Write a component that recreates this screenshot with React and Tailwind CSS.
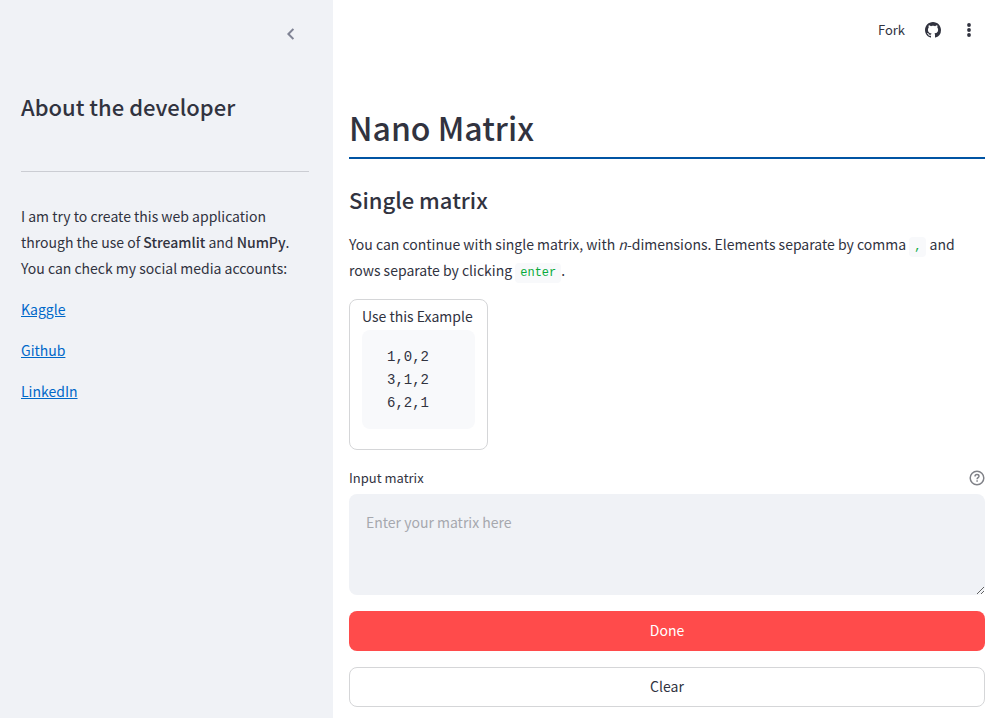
import { useRef, useState } from "react";

const links = ["Kaggle", "Github", "LinkedIn"];

function Sidebar() {
  return (
    <aside className="flex w-[333px] shrink-0 flex-col bg-[#f0f2f6] px-[21px] pt-5">
      <div className="flex justify-end pr-2">
        <button aria-label="Collapse sidebar" className="flex h-7 w-7 items-center justify-center">
          <svg viewBox="0 0 8 12" className="h-3 w-2" fill="none" stroke="#808495" strokeWidth="2">
            <path d="M7.4 1 2.4 6l5 5" />
          </svg>
        </button>
      </div>
      <h2 className="mt-[42px] text-[22px] leading-8 font-medium">About the developer</h2>
      <hr className="mt-[49px] mr-[3px] border-[#cbcdd3]" />
      <div className="mt-[31px] flex flex-col gap-4 leading-[26px]">
        <p>
          I am try to create this web application through the use of{" "}
          <strong className="font-medium">Streamlit</strong> and <strong className="font-medium">NumPy</strong>.
          <br />
          You can check my social media accounts:
        </p>
        {links.map((name) => (
          <a key={name} href={"#" + name} className="self-start leading-[25px] text-[#0068c9] underline">
            {name}
          </a>
        ))}
      </div>
    </aside>
  );
}

function Code({ children }) {
  return (
    <code className="rounded bg-[#f8f9fb] px-[5px] py-[3px] font-['Liberation_Mono',monospace] text-xs text-[#09ab3b]">
      {children}
    </code>
  );
}

function Toolbar() {
  return (
    <header className="flex h-15 items-center justify-end text-[#31333f]">
      <button className="mr-5 text-[13px] leading-5">Fork</button>
      <button aria-label="View source on GitHub" className="mr-5">
        <svg viewBox="0 0 16 16" className="h-4 w-4" fill="currentColor">
          <path d="M8 0C3.58 0 0 3.58 0 8c0 3.54 2.29 6.53 5.47 7.59.4.07.55-.17.55-.38 0-.19-.01-.82-.01-1.49-2.01.37-2.53-.49-2.69-.94-.09-.23-.48-.94-.82-1.13-.28-.15-.68-.52-.01-.53.63-.01 1.08.58 1.23.82.72 1.21 1.87.87 2.33.66.07-.52.28-.87.51-1.07-1.78-.2-3.64-.89-3.64-3.95 0-.87.31-1.59.82-2.15-.08-.2-.36-1.02.08-2.12 0 0 .67-.21 2.2.82.64-.18 1.32-.27 2-.27s1.36.09 2 .27c1.53-1.04 2.2-.82 2.2-.82.44 1.1.16 1.92.08 2.12.51.56.82 1.27.82 2.15 0 3.07-1.87 3.75-3.65 3.95.29.25.54.73.54 1.48 0 1.07-.01 1.93-.01 2.2 0 .21.15.46.55.38A8.01 8.01 0 0 0 16 8c0-4.42-3.58-8-8-8Z" />
        </svg>
      </button>
      <button aria-label="Main menu" className="mr-2">
        <svg viewBox="0 0 16 16" className="h-4 w-4" fill="currentColor">
          <circle cx="8" cy="3" r="1.9" />
          <circle cx="8" cy="8" r="1.9" />
          <circle cx="8" cy="13" r="1.9" />
        </svg>
      </button>
    </header>
  );
}

export default function App() {
  const [matrix, setMatrix] = useState("");
  const input = useRef(null);
  return (
    <div className="flex min-h-screen bg-white font-['Noto_Sans_CJK_SC',sans-serif] text-sm text-[#31333f]">
      <Sidebar />
      <main className="min-w-0 flex-1 pr-[10px] pl-4">
        <Toolbar />
        <h1 className="mt-10 border-b-2 border-[#0054a3] pb-0.5 text-[32px] leading-[55px] font-medium">Nano Matrix</h1>
        <h2 className="mt-6 text-[22px] leading-8 font-medium">Single matrix</h2>
        <p className="mt-4 leading-[26px]">
          You can continue with single matrix, with <em>n</em>-dimensions. Elements separate by comma <Code>,</Code> and
          rows separate by clicking <Code>enter</Code>.
        </p>
        <section className="mt-4 w-fit min-w-[139px] rounded-lg border border-[#d5d6d8] px-3 pt-[3px] pb-5">
          <h3 className="pb-px leading-[26px]">Use this Example</h3>
          <pre className="rounded-lg bg-[#f8f9fb] px-[25px] pt-4 pb-[14px] font-['Liberation_Mono',monospace] leading-[23px]">
            {"1,0,2\n3,1,2\n6,2,1"}
          </pre>
        </section>
        <div className="mt-4 flex h-6 items-center justify-between">
          <label htmlFor="matrix" className="text-[13px]">Input matrix</label>
          <button aria-label="Help" className="text-[#808288]">
            <svg viewBox="0 0 16 16" className="h-4 w-4" fill="none" stroke="currentColor" strokeWidth="1.5">
              <circle cx="8" cy="8" r="6.8" />
              <path d="M6 6.4c0-1.2.9-1.9 2-1.9s2 .7 2 1.7c0 1.5-1.9 1.4-1.9 3M8.1 10.3v1.5" />
            </svg>
          </button>
        </div>
        <textarea
          id="matrix"
          ref={input}
          value={matrix}
          onChange={(e) => setMatrix(e.target.value)}
          placeholder="Enter your matrix here"
          className="mt-1 block h-[101px] w-full resize-y rounded-lg bg-[#f0f2f6] p-[17px] leading-[22px] outline-none placeholder:text-[#a6a8ae]"
        />
        <button
          onClick={() => input.current.focus()}
          className="mt-4 block h-10 w-full rounded-lg bg-[#ff4b4b] pb-0.5 leading-6 text-white"
        >
          Done
        </button>
        <button
          onClick={() => setMatrix("")}
          className="mt-4 block h-10 w-full rounded-lg border border-[#d5d6d8] pb-0.5 leading-6"
        >
          Clear
        </button>
      </main>
    </div>
  );
}
